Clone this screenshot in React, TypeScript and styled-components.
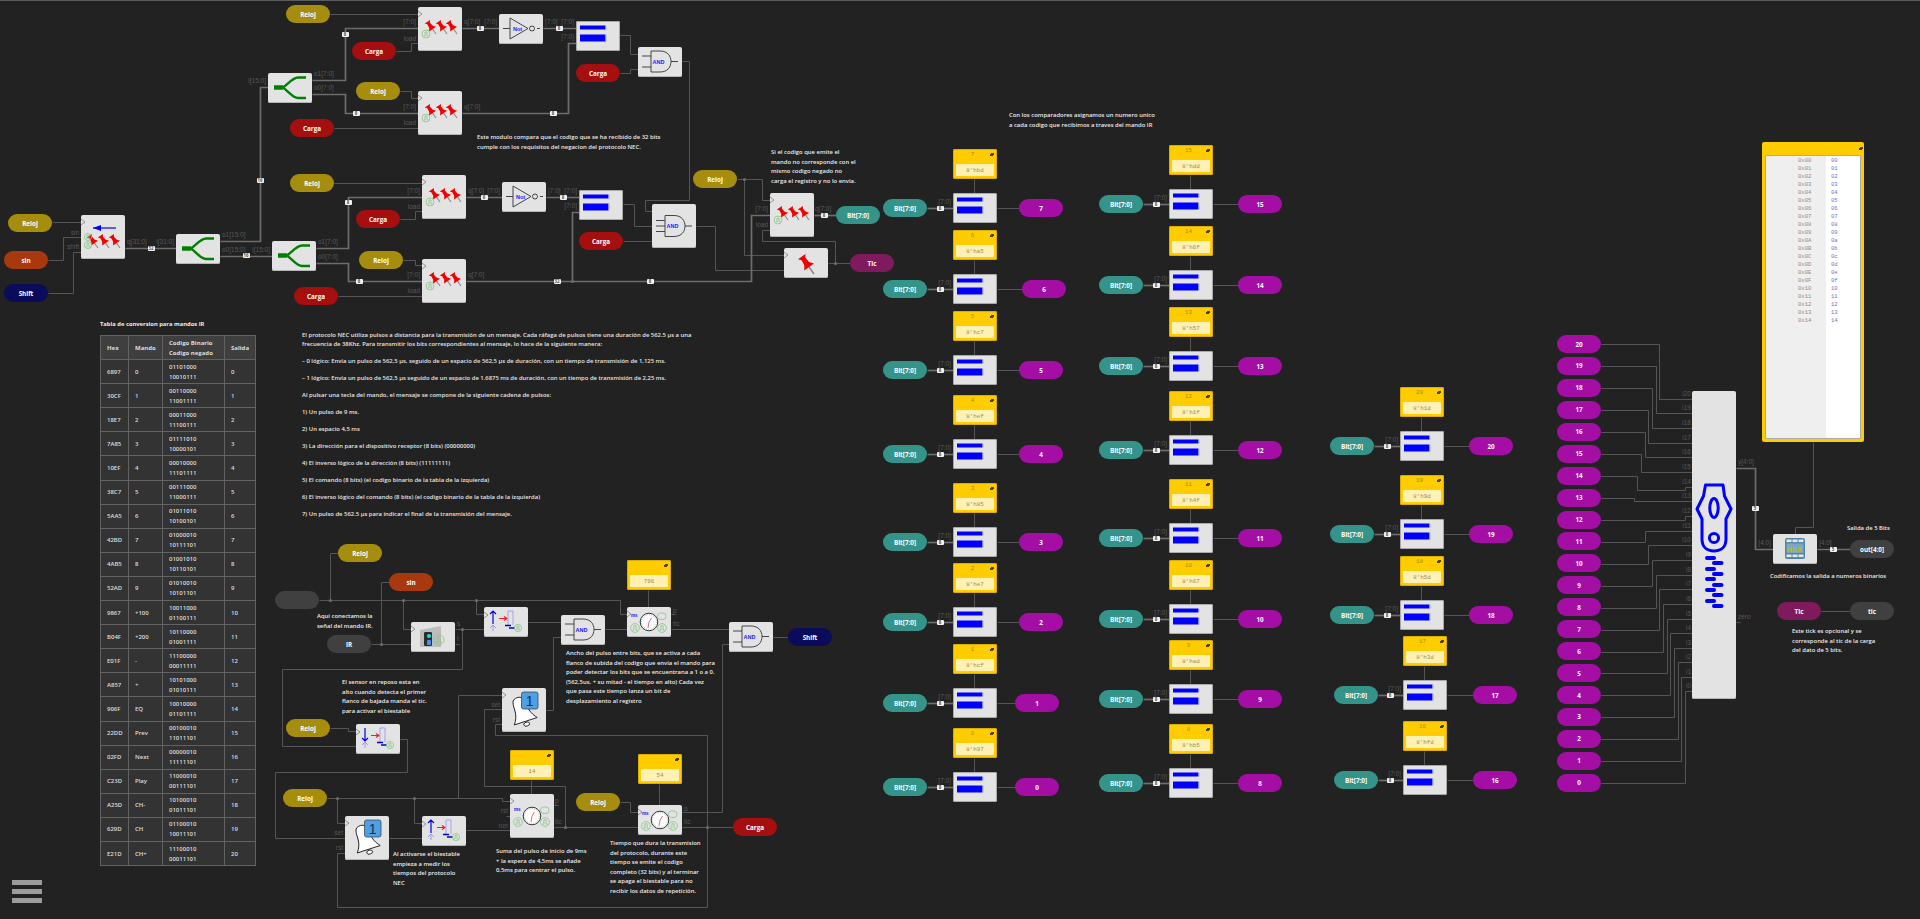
import React from "react";
import styled, { createGlobalStyle } from "styled-components";

const Global = createGlobalStyle`
  html, body { margin: 0; padding: 0; background: #222222; }
  #root { width: 1920px; height: 919px; }
`;

const TEXT = `"Open Sans", "Liberation Sans", sans-serif`;

const Canvas = styled.div`
  position: relative;
  width: 1920px;
  height: 919px;
  overflow: hidden;
  background: #222222;
  border-top: 1px solid #5c5c5c;
  box-sizing: border-box;
  font-family: ${TEXT};
`;

const WireLayer = styled.svg`
  position: absolute;
  left: 0;
  top: -1px;
  width: 1920px;
  height: 919px;
`;

const Placed = styled.div<{ $x: number; $y: number }>`
  position: absolute;
  left: ${(p) => p.$x}px;
  top: ${(p) => p.$y - 1}px;
`;

const PillBody = styled.div<{ $c: string }>`
  width: 44px;
  height: 18px;
  border-radius: 9px;
  background: ${(p) => p.$c};
  color: #fff;
  font-size: 6.3px;
  font-weight: 700;
  display: flex;
  align-items: center;
  justify-content: center;
  white-space: nowrap;
`;

const BlockBody = styled.div<{ $w: number; $h: number; $edge?: boolean }>`
  position: relative;
  width: ${(p) => p.$w}px;
  height: ${(p) => p.$h}px;
  background: #e3e3e3;
  border-radius: 2px;
  box-sizing: border-box;
  box-shadow: ${(p) => (p.$edge ? "inset 0 0 0 1px #a9a9a9" : "inset 0 -1px 0 #b5b5b5")};
`;

const Glyph = styled.svg`
  display: block;
`;

const ConstBody = styled.div`
  position: relative;
  width: 44px;
  height: 30px;
  padding: 15px 3px 0;
  box-sizing: border-box;
  background: #ffcc00;
  border-radius: 2px;
  box-shadow: inset 0 0 0 1px #d9ad05;
`;

const ConstName = styled.div`
  position: absolute;
  left: 0;
  top: 2px;
  width: 39px;
  text-align: center;
  color: #a48a10;
  font: 5.8px "Liberation Mono", monospace;
`;

const Lock = styled.div`
  position: absolute;
  right: 4px;
  top: 5px;
  width: 3px;
  height: 2px;
  background: #4d4008;
  &::before {
    content: "";
    position: absolute;
    left: 0.5px;
    top: -1.2px;
    width: 1px;
    height: 1px;
    border: 0.5px solid #4d4008;
    border-bottom: 0;
    border-radius: 1px 1px 0 0;
  }
`;

const ConstField = styled.div`
  height: 12px;
  background: #fff0b3;
  border-radius: 1px;
  display: flex;
  align-items: center;
  justify-content: center;
  color: #9b8c5c;
  font: 5.8px "Liberation Mono", monospace;
`;

const BadgeBox = styled(Placed)`
  width: 7px;
  height: 5px;
  margin: -2.5px 0 0 -3.5px;
  background: #f2f2f2;
  border-radius: 1px;
  display: flex;
  align-items: center;
  justify-content: center;
  color: #555;
  font-size: 4.4px;
  font-weight: 700;
  line-height: 1;
`;

const PortText = styled(Placed)<{ $right?: boolean }>`
  color: #585858;
  font-family: "Liberation Sans", sans-serif;
  font-size: 6.5px;
  line-height: 6px;
  margin-top: -3px;
  white-space: nowrap;
  transform: ${(p) => (p.$right ? "translateX(-100%)" : "none")};
`;

const Note = styled(Placed)`
  color: #ececec;
  font-size: 5.9px;
  font-weight: 600;
  line-height: 9.5px;
  margin-top: -5px;
`;

const NoteLine = styled.div`
  white-space: nowrap;
`;

const Para = styled.p`
  margin: 0 0 8px;
  line-height: 9px;
  white-space: nowrap;
`;

const Doc = styled(Placed)`
  color: #e6e6e6;
  font-size: 5.9px;
  font-weight: 600;
`;

const TableTitle = styled(Placed)`
  color: #eee;
  font-size: 5.8px;
  font-weight: 700;
  white-space: nowrap;
`;

const Sheet = styled.table`
  position: absolute;
  left: 100px;
  top: 334px;
  width: 155px;
  border-collapse: collapse;
  table-layout: fixed;
  color: #dddddd;
  font-size: 6px;
  font-weight: 600;
  line-height: 10px;
`;

const Cell = styled.td<{ $w?: number }>`
  ${(p) => (p.$w ? `width: ${p.$w}px;` : "")}
  height: 24.1px;
  padding: 0 0 0 6px;
  background: #333333;
  border: 1px solid #626262;
  white-space: nowrap;
  box-sizing: border-box;
`;

const Head = styled(Cell).attrs({ as: "th" })`
  background: #3f3f3f;
  text-align: left;
  font-weight: 700;
`;

const RomBox = styled(Placed)`
  width: 102px;
  height: 300px;
  padding: 14px 4px 4px;
  box-sizing: border-box;
  background: #ffcc00;
  border-radius: 2px;
`;

const RomLock = styled(Lock)`
  right: 2px;
  top: 6px;
`;

const RomSheet = styled.div`
  height: 100%;
  display: grid;
  grid-template-columns: 60px 34px;
  box-shadow: 0 0 0 1px #aaa;
  border-radius: 1px;
  overflow: hidden;
`;

const RomCol = styled.div<{ $addr?: boolean }>`
  background: ${(p) => (p.$addr ? "#efefef" : "#ffffff")};
  color: ${(p) => (p.$addr ? "#8d8d8d" : "#7472cf")};
  font: 5.6px/8px "Liberation Mono", monospace;
  padding: 1px 0 0 ${(p) => (p.$addr ? 32 : 5)}px;
`;

const Burger = styled(Placed)`
  width: 30px;
  display: flex;
  flex-direction: column;
  gap: 4px;
`;

const BurgerBar = styled.div`
  height: 5px;
  background: #9b9b9b;
`;

const Unit = styled(Placed)<{ $a: number; $b: number }>`
  display: grid;
  grid-template-columns: 44px ${(p) => p.$a}px 44px ${(p) => p.$b}px 44px;
  grid-template-rows: 30px 14px 30px;
  align-items: center;
`;

const UnitConst = styled.div`
  grid-column: 3;
  grid-row: 1;
`;

const UnitIn = styled.div`
  grid-column: 1;
  grid-row: 3;
`;

const UnitCmp = styled.div`
  grid-column: 3;
  grid-row: 3;
`;

const UnitOut = styled.div`
  grid-column: 5;
  grid-row: 3;
`;

const PillColumn = styled(Placed)`
  display: flex;
  flex-direction: column;
  gap: 3.95px;
`;

const C = {
  reloj: "#a68d0d",
  carga: "#a50f0f",
  sin: "#a8390f",
  shift: "#0b0b5c",
  bit: "#35948a",
  out: "#a50ea5",
  tic: "#7f1a5c",
  gray: "#404040",
};

const Pill = ({ x, y, c, t }: { x: number; y: number; c: string; t?: string }) => (
  <Placed $x={x} $y={y}>
    <PillBody $c={c}>{t}</PillBody>
  </Placed>
);

type BodyProps = { h?: number; w?: number; edge?: boolean; children?: React.ReactNode };

const Body = ({ h = 30, w = 44, edge, children }: BodyProps) => (
  <BlockBody $w={w} $h={h} $edge={edge}>
    <Glyph width={w} height={h} viewBox={`0 0 ${w} ${h}`}>
      {children}
    </Glyph>
  </BlockBody>
);

const Block = ({ x, y, ...rest }: { x: number; y: number } & BodyProps) => (
  <Placed $x={x} $y={y}>
    <Body {...rest} />
  </Placed>
);

const Chevron = ({ y }: { y: number }) => <polyline points={`0,${y - 3} 4,${y} 0,${y + 3}`} fill="none" stroke="#8a8a8a" strokeWidth="0.9" />;

const PinIcon = ({ x, y, s = 1 }: { x: number; y: number; s?: number }) => (
  <g transform={`translate(${x} ${y}) rotate(-35) scale(${s})`}>
    <line x1="0" y1="0" x2="0" y2="-7" stroke="#888" strokeWidth="1.1" />
    <path d="M-4.2,-6 L4.2,-6 L2,-9 L1.6,-13 L3.2,-15 L-3.2,-15 L-1.6,-13 L-2,-9 Z" fill="#f00000" />
  </g>
);

const Pulse = ({ x, y, r = 4 }: { x: number; y: number; r?: number }) => (
  <g fill="none" stroke="#86c686" strokeWidth="0.8">
    <circle cx={x} cy={y} r={r} />
    <path d={`M${x - r * 0.6},${y + r * 0.5} H${x - r * 0.25} V${y - r * 0.5} H${x + r * 0.25} V${y + r * 0.5} H${x + r * 0.6}`} />
  </g>
);

const Reg = ({ x, y }: { x: number; y: number }) => (
  <Block x={x} y={y} h={44}>
    <Chevron y={7} />
    <PinIcon x={18} y={27} />
    <PinIcon x={29} y={27} />
    <PinIcon x={39} y={27} />
    <Pulse x={8} y={27} />
  </Block>
);

const Split = ({ x, y }: { x: number; y: number }) => (
  <Block x={x} y={y}>
    <g fill="none" stroke="#008000">
      <path d="M6,14.5 H15" strokeWidth="4.5" />
      <path d="M38,4.5 H30 C25,4.5 21,10 15,14.5 C21,19 25,25 30,25 H38" strokeWidth="2.4" />
    </g>
  </Block>
);

const CompareBars = () => (
  <>
    <rect x="4" y="4.5" width="25.5" height="4" fill="#0000ff" />
    <rect x="4" y="13.5" width="25.5" height="7" fill="#0000ff" />
    <rect x="29.5" y="4.5" width="0.8" height="4" fill="#9a9aff" />
    <rect x="29.5" y="13.5" width="0.8" height="7" fill="#9a9aff" />
  </>
);

const Compare = ({ x, y }: { x: number; y: number }) => (
  <Block x={x} y={y} edge>
    <CompareBars />
  </Block>
);

const GateText = styled.text`
  font-family: "Liberation Sans", sans-serif;
  font-size: 5.5px;
  fill: #2020ff;
  font-weight: 700;
`;

const NotGate = ({ x, y }: { x: number; y: number }) => (
  <Block x={x} y={y}>
    <g fill="none" stroke="#333" strokeWidth="0.9">
      <path d="M4,14.5 H11 M11,4 L29,14.5 L11,25 Z M38,14.5 H41" />
      <circle cx="33" cy="14.5" r="2.5" />
    </g>
    <GateText x="14" y="16.5">Not</GateText>
  </Block>
);

const AndGate = ({ x, y, h = 30, three }: { x: number; y: number; h?: number; three?: boolean }) => {
  const c = h / 2 + (three ? 0 : -0.5);
  return (
    <Block x={x} y={y} h={h}>
      <g fill="none" stroke="#333" strokeWidth="0.9">
        <path d={`M13,${c - 10.5} H22 C30,${c - 10.5} 33,${c - 5} 33,${c} C33,${c + 5} 30,${c + 10.5} 22,${c + 10.5} H13 Z`} />
        <path d={`M4,${c - 5.5} H13 M4,${c + 5.5} H13 M33,${c} H40`} />
        {three && <path d={`M4,${c} H13`} />}
      </g>
      <GateText x="14.5" y={c + 2}>AND</GateText>
    </Block>
  );
};

const Edge = ({ x, y, up }: { x: number; y: number; up?: boolean }) => (
  <Block x={x} y={y}>
    <Chevron y={8} />
    <g fill="none" stroke="#0000e0" strokeWidth="1.2">
      {up ? <path d="M9,17 V4 M6,7 L9,4 L12,7" /> : <path d="M9,4 V17 M6,14 L9,17 L12,14" />}
    </g>
    <path d="M9,18 V24 M6,21 L9,18 L12,21" fill="none" stroke="#9a9af5" strokeWidth="1" />
    <path d="M15,11.5 H22 M20,9.5 L23,11.5 L20,13.5" fill="none" stroke="#ee2020" strokeWidth="1.1" />
    <path d="M24,18 V4 H29 V18" fill="none" stroke="#9a9af5" strokeWidth="0.9" />
    <path d="M21,18.5 H27 M25,21 H31" stroke="#0000e0" strokeWidth="1.6" />
    <Pulse x={34} y={21} r={3.6} />
  </Block>
);

const MsText = styled.text`
  font-family: "Liberation Sans", sans-serif;
  font-size: 4.6px;
  fill: #2020e0;
  font-weight: 700;
`;

const Timer = ({ x, y, h = 30 }: { x: number; y: number; h?: number }) => {
  const cy = h === 44 ? 22 : 15;
  return (
    <Block x={x} y={y} h={h}>
      <Chevron y={7} />
      <MsText x="4" y={cy - 5}>ms</MsText>
      <circle cx="22" cy={cy} r="8.8" fill="#fff" stroke="#222" strokeWidth="0.9" />
      <circle cx="22" cy={cy} r="7.4" fill="none" stroke="#999" strokeWidth="0.9" strokeDasharray="0.8 1.5" />
      <path d={`M22,${cy} L24.5,${cy - 4} M22,${cy} L21,${cy + 6}`} stroke="#c33" strokeWidth="0.7" />
      <Pulse x={8} y={cy + 6} r={4.4} />
      <Pulse x={35} y={cy + 6} r={4.4} />
      <rect x="30.5" y={cy - 9} width="8.5" height="6.5" rx="3" fill="none" stroke="#86c686" strokeWidth="0.8" />
    </Block>
  );
};

const BellNum = styled.text`
  font-family: "Liberation Sans", sans-serif;
  font-size: 14px;
  fill: #16304a;
`;

const Bell = ({ x, y }: { x: number; y: number }) => (
  <Block x={x} y={y} h={44}>
    <Chevron y={7} />
    <g transform="rotate(-18 20 25)">
      <path d="M16,10 C22,7 27,10 27,18 C27,26 30,30 33,34 L9,34 C12,30 14,26 14,20 C14,15 14,12 16,10 Z" fill="#fff" stroke="#222" strokeWidth="0.9" />
      <ellipse cx="21" cy="37" rx="3" ry="2" fill="#fff" stroke="#222" strokeWidth="0.9" />
    </g>
    <rect x="19.5" y="4" width="16.5" height="17" rx="2" fill="#4e9fe3" stroke="#3a4a5a" strokeWidth="0.8" />
    <BellNum x="23.8" y="17.5">1</BellNum>
  </Block>
);

const PinBlock = ({ x, y }: { x: number; y: number }) => (
  <Block x={x} y={y}>
    <Chevron y={7} />
    <PinIcon x={30} y={26} s={1.42} />
  </Block>
);

const IrBlock = ({ x, y }: { x: number; y: number }) => (
  <Block x={x} y={y}>
    <Chevron y={7} />
    <polygon points="9,8 30,4 30,25 9,25" fill="#bdbdbd" />
    <rect x="13" y="10" width="8" height="14" rx="1.2" fill="#2d2d2d" />
    <circle cx="18" cy="14" r="2" fill="#18e0e0" />
    <rect x="16" y="18" width="4" height="5" rx="1" fill="#4a8ef0" />
    <Pulse x={28} y={18} r={5} />
  </Block>
);

const HexText = styled.text`
  font-family: "Liberation Sans", sans-serif;
  font-size: 7.5px;
  font-weight: 700;
  fill: #c9b800;
`;

const HexBlock = ({ x, y }: { x: number; y: number }) => (
  <Block x={x} y={y}>
    <rect x="12" y="4" width="20" height="21" rx="2" fill="#4f86a8" />
    <g fill="#e8e8e8">
      {[13.5, 19.5, 25.5].map((cx) => (
        <React.Fragment key={cx}>
          <rect x={cx} y="5.5" width="5" height="2.6" />
          <rect x={cx} y="20.5" width="5" height="2.6" />
        </React.Fragment>
      ))}
    </g>
    <rect x="13.5" y="9.5" width="17" height="9.5" fill="#7ea6bf" />
    <HexText x="13.6" y="17.5">HEX</HexText>
  </Block>
);

const ZipBlock = ({ x, y }: { x: number; y: number }) => {
  const teeth = [165, 170, 176, 181, 186, 192, 197, 202, 208, 213];
  return (
    <Block x={x} y={y} h={308}>
      <g fill="none" stroke="#0000ff">
        <path
          d="M13.5,94 H31 L32.5,105 L39,118 L34,128 V148 C34,156 29,160 22,160 C15,160 10,156 10,148 V128 L5,118 L11.5,105 Z"
          strokeWidth="3"
          strokeLinejoin="round"
        />
        <ellipse cx="22" cy="117" rx="4.2" ry="9.5" strokeWidth="3" />
        <circle cx="22" cy="147" r="4.6" strokeWidth="3" />
      </g>
      {teeth.map((ty, i) => (
        <rect key={ty} x={i % 2 ? 20 : 13} y={ty} width={i % 2 ? 11.5 : 11} height="4" rx="2" fill="#0000ff" />
      ))}
    </Block>
  );
};

const ConstCard = ({ name, v }: { name?: string; v: string }) => (
  <ConstBody>
    {name && <ConstName>{name}</ConstName>}
    <Lock />
    <ConstField>{v}</ConstField>
  </ConstBody>
);

const Constant = ({ x, y, v }: { x: number; y: number; v: string }) => (
  <Placed $x={x} $y={y}>
    <ConstCard v={v} />
  </Placed>
);

const Badge = ({ x, y, t = "8" }: { x: number; y: number; t?: string }) => (
  <BadgeBox $x={x} $y={y}>
    {t}
  </BadgeBox>
);

const Port = ({ x, y, t, r }: { x: number; y: number; t: string; r?: boolean }) => (
  <PortText $x={x} $y={y} $right={r}>
    {t}
  </PortText>
);

const Txt = ({ x, y, lines }: { x: number; y: number; lines: string[] }) => (
  <Note $x={x} $y={y}>
    {lines.map((l) => (
      <NoteLine key={l}>{l}</NoteLine>
    ))}
  </Note>
);

type CmpRow = { n: number; x: number; y: number; bit: number; out: number; hex: string };

const cmp: CmpRow[] = [
  { n: 7, x: 953, y: 193, bit: 883, out: 1019, hex: "bd" },
  { n: 6, x: 953, y: 274, bit: 883, out: 1022, hex: "a5" },
  { n: 5, x: 953, y: 355, bit: 883, out: 1019, hex: "c7" },
  { n: 4, x: 953, y: 439, bit: 883, out: 1019, hex: "ef" },
  { n: 3, x: 953, y: 527, bit: 883, out: 1019, hex: "85" },
  { n: 2, x: 953, y: 607, bit: 883, out: 1019, hex: "e7" },
  { n: 1, x: 953, y: 688, bit: 883, out: 1015, hex: "cf" },
  { n: 0, x: 953, y: 772, bit: 883, out: 1015, hex: "97" },
  { n: 15, x: 1169, y: 189, bit: 1099, out: 1238, hex: "dd" },
  { n: 14, x: 1169, y: 270, bit: 1099, out: 1238, hex: "6f" },
  { n: 13, x: 1169, y: 351, bit: 1099, out: 1238, hex: "57" },
  { n: 12, x: 1169, y: 435, bit: 1099, out: 1238, hex: "1f" },
  { n: 11, x: 1169, y: 523, bit: 1099, out: 1238, hex: "4f" },
  { n: 10, x: 1169, y: 604, bit: 1099, out: 1238, hex: "67" },
  { n: 9, x: 1169, y: 684, bit: 1099, out: 1238, hex: "ad" },
  { n: 8, x: 1169, y: 768, bit: 1099, out: 1238, hex: "b5" },
  { n: 20, x: 1400, y: 431, bit: 1330, out: 1469, hex: "1d" },
  { n: 19, x: 1400, y: 519, bit: 1330, out: 1469, hex: "9d" },
  { n: 18, x: 1400, y: 600, bit: 1330, out: 1469, hex: "5d" },
  { n: 17, x: 1403, y: 680, bit: 1334, out: 1473, hex: "3d" },
  { n: 16, x: 1403, y: 765, bit: 1334, out: 1473, hex: "fd" },
];

const muxIn: { n: number; y: number; v: number; port: number; extra?: number }[] = [
  { n: 20, y: 344, v: 1659, port: 399 },
  { n: 19, y: 366, v: 1656, port: 413 },
  { n: 18, y: 388, v: 1652, port: 428 },
  { n: 17, y: 410, v: 1648, port: 443 },
  { n: 16, y: 432, v: 1645, port: 457 },
  { n: 15, y: 454, v: 1641, port: 472 },
  { n: 14, y: 476, v: 1637, port: 487, extra: 490 },
  { n: 13, y: 498, v: 1634, port: 501 },
  { n: 12, y: 520, v: 1685, port: 516 },
  { n: 11, y: 542, v: 1645, port: 531 },
  { n: 10, y: 564, v: 1648, port: 545 },
  { n: 9, y: 586, v: 1652, port: 560 },
  { n: 8, y: 608, v: 1656, port: 575 },
  { n: 7, y: 630, v: 1659, port: 589 },
  { n: 6, y: 652, v: 1663, port: 604 },
  { n: 5, y: 673, v: 1667, port: 619 },
  { n: 4, y: 695, v: 1670, port: 633 },
  { n: 3, y: 717, v: 1674, port: 648 },
  { n: 2, y: 739, v: 1678, port: 662 },
  { n: 1, y: 761, v: 1681, port: 677 },
  { n: 0, y: 783, v: 1685, port: 691 },
];

const thin: string[] = [
  "52,222 81,222",
  "48,260 63,260 63,237 81,237",
  "48,293 73,293 73,252 81,252",
  "330,14 418,14",
  "396,51 411,51 411,43 418,43",
  "400,91 411,91 411,98 418,98",
  "334,128 418,128",
  "334,183 422,183",
  "400,219 415,219 415,211 422,211",
  "403,260 415,260 415,265 422,265",
  "338,296 422,296",
  "620,35 630,35 630,54 638,54",
  "620,73 630,73 630,69 638,69",
  "682,61 689,61 689,200 645,200 645,211 652,211",
  "623,204 634,204 634,226 652,226",
  "623,241 652,241",
  "696,226 715,226 715,270 784,270",
  "737,179 762,179 762,200 770,200",
  "744,179 744,255 784,255",
  "828,263 850,263",
  "835,263 835,241 762,241 762,230 770,230",
  "338,553 330,553 330,600",
  "319,600 620,600 620,614 627,614",
  "403,600 403,629 411,629",
  "476,600 476,614 484,614",
  "389,582 381,582 381,644",
  "371,644 411,644",
  "455,629 484,629",
  "455,644 459,644",
  "462,629 462,669 282,669 282,746 356,746",
  "528,622 561,622",
  "561,637 553,637 553,710 546,710",
  "605,629 627,629",
  "671,629 729,629",
  "671,614 675,614",
  "729,644 722,644 722,812 682,812",
  "773,637 788,637",
  "648,590 648,607",
  "330,728 348,728 348,731 356,731",
  "327,798 502,798 502,801 510,801",
  "458,798 458,695 502,695",
  "337,798 337,823 345,823",
  "414,798 414,823 422,823",
  "502,709 484,709 484,786 565,786 565,827",
  "554,827 638,827",
  "682,827 733,827",
  "502,724 495,724 495,735 707,735 707,907 337,907 337,853 345,853",
  "400,739 407,739 407,772 275,772 275,838 345,838",
  "389,838 422,838",
  "466,830 510,830",
  "554,805 558,805",
  "506,816 510,816",
  "531,780 531,794",
  "659,784 659,805",
  "620,802 630,802 630,812 638,812",
  "1813,442 1813,527 1795,527 1795,534",
  "1736,622 1740,622",
  "1821,611 1850,611",
];

const bus: string[] = [
  "125,248 176,248",
  "220,241 260,241 260,87 268,87",
  "220,256 272,256",
  "312,80 345,80 345,28 418,28",
  "312,94 345,94 345,113 418,113",
  "316,248 348,248 348,197 422,197",
  "316,263 348,263 348,281 422,281",
  "462,28 499,28",
  "543,28 576,28",
  "462,113 568,113 568,43 576,43",
  "466,197 502,197",
  "546,197 579,197",
  "466,281 751,281 751,215 770,215",
  "572,281 572,212 579,212",
  "814,215 836,215",
  "1736,468 1755,468 1755,549 1773,549",
  "1817,549 1850,549",
];

const dots: [number, number][] = [
  [572, 281],
  [744, 179],
  [835, 263],
  [330, 600],
  [403, 600],
  [476, 600],
  [381, 644],
  [462, 629],
  [337, 798],
  [414, 798],
  [565, 827],
  [707, 827],
];

const badges: [number, number, string][] = [
  [151, 248, "32"],
  [260, 180, "16"],
  [246, 255, "16"],
  [345, 34, "8"],
  [356, 113, "8"],
  [348, 202, "8"],
  [359, 281, "8"],
  [480, 28, "8"],
  [559, 28, "8"],
  [553, 113, "8"],
  [484, 197, "8"],
  [563, 197, "8"],
  [557, 281, "32"],
  [650, 281, "8"],
  [824, 215, "8"],
  [1755, 508, "5"],
  [1833, 549, "5"],
];

const rows = [
  ["6897", "0", "01101000", "10010111", "0"],
  ["30CF", "1", "00110000", "11001111", "1"],
  ["18E7", "2", "00011000", "11100111", "2"],
  ["7A85", "3", "01111010", "10000101", "3"],
  ["10EF", "4", "00010000", "11101111", "4"],
  ["38C7", "5", "00111000", "11000111", "5"],
  ["5AA5", "6", "01011010", "10100101", "6"],
  ["42BD", "7", "01000010", "10111101", "7"],
  ["4AB5", "8", "01001010", "10110101", "8"],
  ["52AD", "9", "01010010", "10101101", "9"],
  ["9867", "+100", "10011000", "01100111", "10"],
  ["B04F", "+200", "10110000", "01001111", "11"],
  ["E01F", "-", "11100000", "00011111", "12"],
  ["A857", "+", "10101000", "01010111", "13"],
  ["906F", "EQ", "10010000", "01101111", "14"],
  ["22DD", "Prev", "00100010", "11011101", "15"],
  ["02FD", "Next", "00000010", "11111101", "16"],
  ["C23D", "Play", "11000010", "00111101", "17"],
  ["A25D", "CH-", "10100010", "01011101", "18"],
  ["629D", "CH", "01100010", "10011101", "19"],
  ["E21D", "CH+", "11100010", "00011101", "20"],
];

const protocol = [
  ["El protocolo NEC utiliza pulsos a distancia para la transmisión de un mensaje. Cada ráfaga de pulsos tiene una duración de 562.5 µs a una", "frecuencia de 38Khz. Para transmitir los bits correspondientes al mensaje, lo hace de la siguiente manera:"],
  ["– 0 lógico: Envía un pulso de 562,5 µs, seguido de un espacio de 562,5 µs de duración, con un tiempo de transmisión de 1,125 ms."],
  ["– 1 lógico: Envía un pulso de 562,5 µs seguido de un espacio de 1.6875 ms de duración, con un tiempo de transmisión de 2,25 ms."],
  ["Al pulsar una tecla del mando, el mensaje se compone de la siguiente cadena de pulsos:"],
  ["1) Un pulso de 9 ms."],
  ["2) Un espacio 4,5 ms"],
  ["3) La dirección para el dispositivo receptor (8 bits) (00000000)"],
  ["4) El inverso lógico de la dirección (8 bits) (11111111)"],
  ["5) El comando (8 bits) (el codigo binario de la tabla de la izquierda)"],
  ["6) El inverso lógico del comando (8 bits) (el codigo binario de la tabla de la izquierda)"],
  ["7) Un pulso de 562.5 µs para indicar el final de la transmisión del mensaje."],
];

const romRows = Array.from({ length: 21 }, (_, i) => i);
const hx = (i: number) => i.toString(16).padStart(2, "0");

export default function App() {
  return (
    <Canvas>
      <Global />
      <WireLayer viewBox="0 0 1920 919">
        <g transform="translate(.5 .5)" fill="none" strokeLinejoin="miter">
          <g stroke="#555555" strokeWidth="1">
            {thin.map((p) => (
              <polyline key={p} points={p} />
            ))}
            {cmp.map((r) => (
              <polyline key={r.n} points={`${r.x + 44},${r.y + 15} ${r.out},${r.y + 15}`} />
            ))}
            {cmp.map((r) => (
              <polyline key={r.n} points={`${r.x + 21},${r.y - 14} ${r.x + 21},${r.y}`} />
            ))}
            {muxIn.map((m) => (
              <polyline
                key={m.n}
                points={`1601,${m.y} ${m.v},${m.y} ${m.v},${m.extra ?? m.port} ${m.extra ? `1685,${m.extra} 1685,${m.port} ` : ""}1692,${m.port}`}
              />
            ))}
          </g>
          <g stroke="#6d6d6d" strokeWidth="1.7">
            {bus.map((p) => (
              <polyline key={p} points={p} />
            ))}
            {cmp.map((r) => (
              <polyline key={r.n} points={`${r.bit + 44},${r.y + 15} ${r.x},${r.y + 15}`} />
            ))}
          </g>
          <g fill="#6d6d6d">
            {dots.map(([x, y]) => (
              <circle key={`${x}-${y}`} cx={x} cy={y} r="1.6" />
            ))}
          </g>
        </g>
      </WireLayer>

      <Pill x={8} y={214} c={C.reloj} t="Reloj" />
      <Pill x={4} y={251} c={C.sin} t="sin" />
      <Pill x={4} y={284} c={C.shift} t="Shift" />
      <Pill x={286} y={5} c={C.reloj} t="Reloj" />
      <Pill x={352} y={42} c={C.carga} t="Carga" />
      <Pill x={356} y={82} c={C.reloj} t="Reloj" />
      <Pill x={290} y={119} c={C.carga} t="Carga" />
      <Pill x={290} y={174} c={C.reloj} t="Reloj" />
      <Pill x={356} y={210} c={C.carga} t="Carga" />
      <Pill x={359} y={251} c={C.reloj} t="Reloj" />
      <Pill x={294} y={287} c={C.carga} t="Carga" />
      <Pill x={576} y={64} c={C.carga} t="Carga" />
      <Pill x={579} y={232} c={C.carga} t="Carga" />
      <Pill x={693} y={170} c={C.reloj} t="Reloj" />
      <Pill x={836} y={206} c={C.bit} t="Bit[7:0]" />
      <Pill x={850} y={254} c={C.tic} t="Tic" />

      <Block x={81} y={215} h={44}>
        <Chevron y={7} />
        <path d="M12,13 H35" stroke="#0000ff" strokeWidth="1.2" />
        <path d="M12,13 L20,10 V16 Z" fill="#0000ff" />
        <PinIcon x={17} y={33} />
        <PinIcon x={28} y={33} />
        <PinIcon x={39} y={33} />
        <Pulse x={7} y={22} r={3.6} />
        <Pulse x={7} y={30} r={3.6} />
      </Block>
      <Split x={176} y={234} />
      <Split x={268} y={73} />
      <Split x={272} y={241} />
      <Reg x={418} y={7} />
      <Reg x={418} y={91} />
      <Reg x={422} y={175} />
      <Reg x={422} y={259} />
      <NotGate x={499} y={14} />
      <NotGate x={502} y={182} />
      <Compare x={576} y={21} />
      <Compare x={579} y={190} />
      <AndGate x={638} y={47} />
      <AndGate x={652} y={204} h={44} three />
      <Reg x={770} y={193} />
      <PinBlock x={784} y={248} />

      {cmp.map((r) => (
        <React.Fragment key={r.n}>
          <Unit $x={r.bit} $y={r.y - 44} $a={r.x - r.bit - 44} $b={r.out - r.x - 44}>
            <UnitConst>
              <ConstCard name={String(r.n)} v={`8'h${r.hex}`} />
            </UnitConst>
            <UnitIn>
              <PillBody $c={C.bit}>Bit[7:0]</PillBody>
            </UnitIn>
            <UnitCmp>
              <Body edge>
                <CompareBars />
              </Body>
            </UnitCmp>
            <UnitOut>
              <PillBody $c={C.out}>{r.n}</PillBody>
            </UnitOut>
          </Unit>
          <Badge x={r.x - 13} y={r.y + 15} />
          <Port x={r.x - 2} y={r.y + 9} t="[7:0]" r />
        </React.Fragment>
      ))}

      <PillColumn $x={1557} $y={335}>
        {muxIn.map((m) => (
          <PillBody key={m.n} $c={C.out}>
            {m.n}
          </PillBody>
        ))}
      </PillColumn>
      {muxIn.map((m) => (
        <Port key={m.n} x={1691} y={m.port - 5} t={`i${m.n}`} r />
      ))}
      <ZipBlock x={1692} y={391} />
      <HexBlock x={1773} y={534} />
      <Pill x={1850} y={540} c={C.gray} t="out[4:0]" />
      <Pill x={1777} y={602} c={C.tic} t="Tic" />
      <Pill x={1850} y={602} c={C.gray} t="tic" />

      <RomBox $x={1762} $y={142}>
        <RomLock />
        <RomSheet>
          <RomCol $addr>
            {romRows.map((i) => (
              <div key={i}>{`0x${hx(i).toUpperCase()}`}</div>
            ))}
          </RomCol>
          <RomCol>
            {romRows.map((i) => (
              <div key={i}>{hx(i)}</div>
            ))}
          </RomCol>
        </RomSheet>
      </RomBox>

      <Pill x={338} y={544} c={C.reloj} t="Reloj" />
      <Pill x={389} y={573} c={C.sin} t="sin" />
      <Pill x={275} y={591} c={C.gray} />
      <Pill x={327} y={635} c={C.gray} t="IR" />
      <IrBlock x={411} y={622} />
      <Edge x={484} y={607} up />
      <AndGate x={561} y={615} />
      <Constant x={627} y={560} v="796" />
      <Timer x={627} y={607} />
      <AndGate x={729} y={622} />
      <Pill x={788} y={628} c={C.shift} t="Shift" />
      <Bell x={502} y={688} />
      <Pill x={286} y={719} c={C.reloj} t="Reloj" />
      <Edge x={356} y={724} />
      <Pill x={283} y={789} c={C.reloj} t="Reloj" />
      <Bell x={345} y={816} />
      <Edge x={422} y={816} up />
      <Constant x={510} y={750} v="14" />
      <Timer x={510} y={794} h={44} />
      <Constant x={638} y={754} v="54" />
      <Pill x={576} y={793} c={C.reloj} t="Reloj" />
      <Timer x={638} y={805} />
      <Pill x={733} y={818} c={C.carga} t="Carga" />

      {badges.map(([x, y, t]) => (
        <Badge key={`${x}-${y}`} x={x} y={y} t={t} />
      ))}

      <Port x={79} y={233} t="sin" r />
      <Port x={79} y={247} t="shift" r />
      <Port x={127} y={242} t="q[31:0]" />
      <Port x={174} y={242} t="i[31:0]" r />
      <Port x={222} y={235} t="o1[15:0]" />
      <Port x={222} y={250} t="o0[15:0]" />
      <Port x={266} y={81} t="i[15:0]" r />
      <Port x={270} y={250} t="i[15:0]" r />
      <Port x={314} y={74} t="o1[7:0]" />
      <Port x={314} y={88} t="o0[7:0]" />
      <Port x={318} y={242} t="o1[7:0]" />
      <Port x={318} y={257} t="o0[7:0]" />
      {[
        [416, 22, 39, 464],
        [416, 107, 123, 464],
        [420, 191, 207, 468],
        [420, 275, 291, 468],
      ].map(([x, y1, y2, q]) => (
        <React.Fragment key={y1}>
          <Port x={x} y={y1} t="[7:0]" r />
          <Port x={x} y={y2} t="load" r />
          <Port x={q} y={y1} t="q[7:0]" />
        </React.Fragment>
      ))}
      <Port x={497} y={22} t="[7:0]" r />
      <Port x={545} y={22} t="[7:0]" />
      <Port x={574} y={22} t="[7:0]" r />
      <Port x={574} y={37} t="[7:0]" r />
      <Port x={500} y={191} t="[7:0]" r />
      <Port x={548} y={191} t="[7:0]" />
      <Port x={577} y={191} t="[7:0]" r />
      <Port x={577} y={206} t="[7:0]" r />
      <Port x={768} y={209} t="[7:0]" r />
      <Port x={768} y={225} t="load" r />
      <Port x={815} y={209} t="q[7:0]" />
      <Port x={457} y={624} t="s" />
      <Port x={457} y={639} t="t" />
      <Port x={673} y={611} t="p" />
      <Port x={673} y={624} t="tic" />
      <Port x={500} y={705} t="set" r />
      <Port x={500} y={720} t="rst" r />
      <Port x={343} y={833} t="set" r />
      <Port x={343} y={848} t="rst" r />
      <Port x={508} y={811} t="rst" r />
      <Port x={508} y={826} t="run" r />
      <Port x={555} y={801} t="p" />
      <Port x={555} y={822} t="tic" />
      <Port x={684} y={809} t="p" />
      <Port x={684} y={822} t="tic" />
      <Port x={1738} y={462} t="y[4:0]" />
      <Port x={1738} y={617} t="zero" />
      <Port x={1771} y={543} t="[4:0]" r />
      <Port x={1819} y={543} t="[4:0]" />

      <Txt x={477} y={138} lines={["Este modulo compara que el codigo que se ha recibido de 32 bits", "cumple con los requisitos del negacion del protocolo NEC."]} />
      <Txt x={771} y={153} lines={["Si el codigo que emite el", "mando no corresponde con el", "mismo codigo negado no", "carga el registro y no lo envia."]} />
      <Txt x={1009} y={116} lines={["Con los comparadores asignamos un numero unico", "a cada codigo que recibimos a traves del mando IR"]} />
      <Txt x={317} y={617} lines={["Aqui conectamos la", "señal del mando IR."]} />
      <Txt x={342} y={683} lines={["El sensor en reposo esta en", "alto cuando detecta el primer", "flanco de bajada manda el tic.", "para activar el biestable"]} />
      <Txt x={566} y={654} lines={["Ancho del pulso entre bits, que se activa a cada", "flanco de subida del codigo que envia el mando para", "poder detectar los bits que se encuentrana a 1 o a 0.", "(562,5us. + su mitad - el tiempo en alto) Cada vez", "que pasa este tiempo lanza un bit de", "desplazamiento al registro"]} />
      <Txt x={393} y={855} lines={["Al activarse el biestable", "empieza a medir los", "tiempos del protocolo", "NEC"]} />
      <Txt x={496} y={852} lines={["Suma del pulso de inicio de 9ms", "+ la espera de 4,5ms se añade", "0,5ms para centrar el pulso."]} />
      <Txt x={610} y={844} lines={["Tiempo que dura la transmision", "del protocolo, durante este", "tiempo se emite el codigo", "completo (32 bits) y al terminar", "se apaga el biestable para no", "recibir los datos de repetición."]} />
      <Txt x={1847} y={529} lines={["Salida de 5 Bits"]} />
      <Txt x={1770} y={577} lines={["Codificamos la salida a numeros binarios"]} />
      <Txt x={1792} y={632} lines={["Este tick es opcional y se", "corresponde al tic de la carga", "del dato de 5 bits."]} />

      <TableTitle $x={100} $y={320}>Tabla de conversion para mandos IR</TableTitle>
      <Sheet>
        <thead>
          <tr>
            <Head $w={28}>Hex</Head>
            <Head $w={34}>Mando</Head>
            <Head $w={62}>Codigo Binario<br />Codigo negado</Head>
            <Head $w={31}>Salida</Head>
          </tr>
        </thead>
        <tbody>
          {rows.map((r) => (
            <tr key={r[0]}>
              <Cell>{r[0]}</Cell>
              <Cell>{r[1]}</Cell>
              <Cell>{r[2]}<br />{r[3]}</Cell>
              <Cell>{r[4]}</Cell>
            </tr>
          ))}
        </tbody>
      </Sheet>

      <Doc $x={302} $y={331}>
        {protocol.map((p) => (
          <Para key={p[0]}>
            {p.map((l) => (
              <NoteLine key={l}>{l}</NoteLine>
            ))}
          </Para>
        ))}
      </Doc>

      <Burger $x={12} $y={880}>
        <BurgerBar />
        <BurgerBar />
        <BurgerBar />
      </Burger>
    </Canvas>
  );
}
